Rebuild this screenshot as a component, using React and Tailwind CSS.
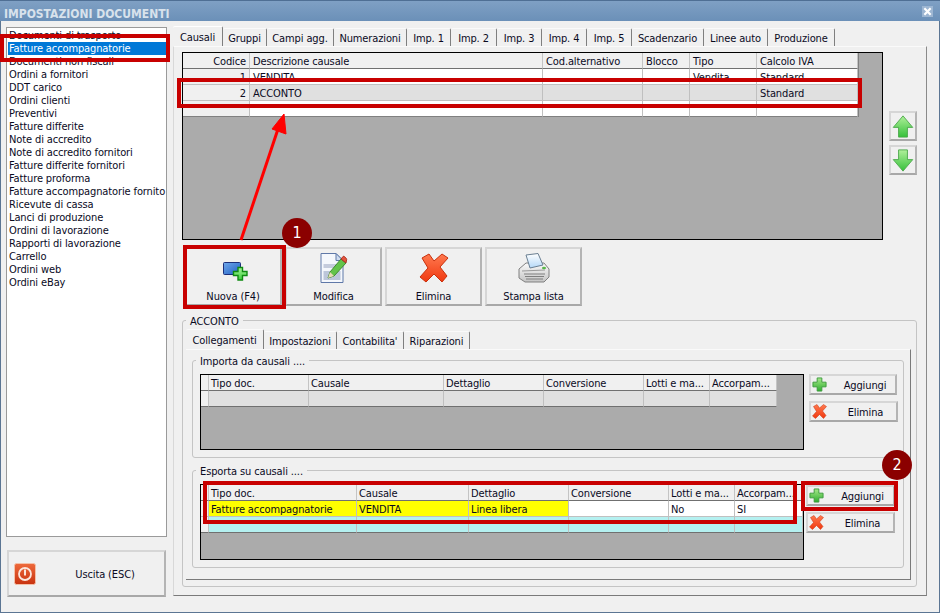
import { useId } from "react";

const documenti = [
  "Documenti di trasporto",
  "Fatture accompagnatorie",
  "Documenti non fiscali",
  "Ordini a fornitori",
  "DDT carico",
  "Ordini clienti",
  "Preventivi",
  "Fatture differite",
  "Note di accredito",
  "Note di accredito fornitori",
  "Fatture differite fornitori",
  "Fatture proforma",
  "Fatture accompagnatorie fornito",
  "Ricevute di cassa",
  "Lanci di produzione",
  "Ordini di lavorazione",
  "Rapporti di lavorazione",
  "Carrello",
  "Ordini web",
  "Ordini eBay",
];

const mainTabs = [
  ["Causali", "w-[50px] h-[20px] border-t-white"],
  ["Gruppi", "w-[44px] h-[18px]"],
  ["Campi agg.", "w-[67px] h-[18px]"],
  ["Numerazioni", "w-[73px] h-[18px]"],
  ["Imp. 1", "w-[44px] h-[18px]"],
  ["Imp. 2", "w-[46px] h-[18px]"],
  ["Imp. 3", "w-[45px] h-[18px]"],
  ["Imp. 4", "w-[45px] h-[18px]"],
  ["Imp. 5", "w-[45px] h-[18px]"],
  ["Scadenzario", "w-[72px] h-[18px]"],
  ["Linee auto", "w-[64px] h-[18px]"],
  ["Produzione", "w-[67px] h-[18px]"],
];

const subTabs = [
  ["Collegamenti", "w-[78px] h-[20px]"],
  ["Impostazioni", "w-[73px] h-[18px]"],
  ["Contabilita'", "w-[67px] h-[18px]"],
  ["Riparazioni", "w-[66px] h-[18px]"],
];

const linkHeaders = ["Tipo doc.", "Causale", "Dettaglio", "Conversione", "Lotti e ma...", "Accorpam..."];

function Tab({ label, className }) {
  return (
    <div className={`flex items-center justify-center rounded-t-[2px] border-t border-r border-t-[#fafafa] border-r-[#7f7f7f] bg-[#f0f0f0] pt-[3px] whitespace-nowrap ${className}`}>
      {label}
    </div>
  );
}

function Cell({ children, className = "" }) {
  return (
    <div className={`h-[16px] overflow-hidden whitespace-nowrap border-r border-b border-[#c0c0c0] px-[3px] leading-[17px] ${className}`}>
      {children}
    </div>
  );
}

function Head({ children, className = "" }) {
  return (
    <div className={`h-[16px] overflow-hidden whitespace-nowrap border-r border-b border-r-[#c4c4c4] border-b-[#707070] bg-[#f0f0f0] px-[3px] leading-[17px] ${className}`}>
      {children}
    </div>
  );
}

function PlusIcon({ className }) {
  const id = useId();
  return (
    <svg viewBox="0 0 16 16" className={className}>
      <defs>
        <linearGradient id={id} x1="0" y1="0" x2="0" y2="1">
          <stop offset="0" stopColor="#a6e88a" />
          <stop offset="1" stopColor="#2fae2f" />
        </linearGradient>
      </defs>
      <path d="M5.500 1h5v4.500H15v5h-4.500V15h-5v-4.500H1v-5h4.500z" fill={`url(#${id})`} stroke="#3c9a3c" strokeLinejoin="round" />
    </svg>
  );
}

function CrossIcon({ className }) {
  const id = useId();
  return (
    <svg viewBox="0 0 30 30" className={className}>
      <defs>
        <linearGradient id={id} x1="0" y1="0" x2="0" y2="1">
          <stop offset="0" stopColor="#ff7a50" />
          <stop offset="1" stopColor="#f0380f" />
        </linearGradient>
      </defs>
      <path
        d="M3 5 10 1 15 8 23 1 29 5 21 14 28 23 23 29 15 21 7 29 1 24 9 15z"
        fill={`url(#${id})`}
        stroke="#c8300c"
        strokeLinejoin="round"
      />
    </svg>
  );
}

function ArrowIcon({ down = false }) {
  const id = useId();
  return (
    <svg viewBox="0 0 24 26" className="h-[23px] w-[22px]">
      <defs>
        <linearGradient id={id} x1="0" y1="0" x2="0" y2="1">
          <stop offset="0" stopColor="#b0f09a" />
          <stop offset="1" stopColor="#35c03a" />
        </linearGradient>
      </defs>
      <path
        d={down ? "M7 1h10v11h6L12 25 1 12h6z" : "M12 1l11 13h-6v11H7V14H1z"}
        fill={`url(#${id})`}
        stroke="#46a646"
        strokeLinejoin="round"
      />
    </svg>
  );
}

function NuovaIcon() {
  return (
    <svg viewBox="0 0 25 20" className="mt-[7px] ml-[4px] h-[20px] w-[25px]">
      <defs>
        <linearGradient id="nuovaBlue" x1="0" y1="0" x2="1" y2="1">
          <stop offset="0" stopColor="#6fa8ea" />
          <stop offset="1" stopColor="#1f5ec4" />
        </linearGradient>
        <linearGradient id="nuovaGreen" x1="0" y1="0" x2="0" y2="1">
          <stop offset="0" stopColor="#a8f59a" />
          <stop offset="1" stopColor="#3ccf3c" />
        </linearGradient>
      </defs>
      <rect x="0.500" y="0.500" width="17" height="12" rx="1" fill="url(#nuovaBlue)" stroke="#1c2f7a" />
      <path d="M15 5.500h4.500v4H24v4h-4.500V18H15v-4.500h-4.500v-4H15z" fill="url(#nuovaGreen)" stroke="#0f8a12" strokeWidth="1.400" />
    </svg>
  );
}

function ModificaIcon() {
  return (
    <svg viewBox="0 0 28 30" className="h-[30px] w-[28px]">
      <path d="M1 .5h15l7 7v22H1z" fill="#f4f7fc" stroke="#5f78a8" />
      <path d="M16 .5v7h7z" fill="#cfdcf0" stroke="#5f78a8" />
      <rect x="3.500" y="11" width="17" height="4" fill="#c4cbdc" />
      <rect x="3.500" y="18" width="17" height="9" fill="#bcc6da" />
      <path d="M8 25l2-6L21 6l5 4-12 13z" fill="#63c34a" stroke="#3f8a30" strokeLinejoin="round" />
      <path d="M21 6l2-2.500c1-1 4.500 2.500 3.500 3.500L26 10z" fill="#e4553f" stroke="#a83020" />
      <path d="M8 25l2-6 4 4z" fill="#e8d9b8" />
    </svg>
  );
}

function PrinterIcon() {
  return (
    <svg viewBox="0 0 32 30" className="h-[30px] w-[32px]">
      <defs>
        <linearGradient id="printerPaper" x1="0" y1="0" x2="0" y2="1">
          <stop offset="0" stopColor="#ffffff" />
          <stop offset="1" stopColor="#b4d8f8" />
        </linearGradient>
        <linearGradient id="printerBody" x1="0" y1="0" x2="0" y2="1">
          <stop offset="0" stopColor="#fafafa" />
          <stop offset="1" stopColor="#c4c4c4" />
        </linearGradient>
      </defs>
      <path d="M1 16 8 10h18l5 6v8l-5 5H7l-6-4z" fill="url(#printerBody)" stroke="#808080" strokeLinejoin="round" />
      <path d="M8 2 20 0.500 25 12 12 15z" fill="url(#printerPaper)" stroke="#6a7f92" strokeLinejoin="round" />
      <path d="M4 18 27 17" stroke="#9a9a9a" />
      <ellipse cx="26" cy="15" rx="2" ry="1.200" fill="#57b84a" />
      <path d="M6 21h21M7 23.500h19M8 26h17" stroke="#7f7f7f" />
    </svg>
  );
}

function BigButton({ label, icon, className = "" }) {
  return (
    <div className={`flex h-[59px] flex-col items-center border-2 border-[#d6d6d6] border-r-[#b4b4b4] border-b-[#a8a8a8] bg-[#f0f0f0] ${className}`}>
      <div className="flex h-[36px] items-center justify-center pt-[2px]">{icon}</div>
      <div className="mt-[5px] leading-[14px]">{label}</div>
    </div>
  );
}

function SideButton({ label, icon, className = "" }) {
  return (
    <div className={`flex h-[21px] items-center border-2 border-[#d6d6d6] border-r-[#b4b4b4] border-b-[#a8a8a8] bg-[#f0f0f0] pl-[1px] ${className}`}>
      {icon}
      <span className="flex-1 pt-[3px] pl-[8px] text-center">{label}</span>
    </div>
  );
}

function GroupBox({ title, className = "", children }) {
  return (
    <div className={`relative rounded-[3px] border border-[#c4c4c4] ${className}`}>
      <span className="absolute top-[-6px] left-[3px] bg-[#f0f0f0] px-[4px] leading-[14px]">{title}</span>
      {children}
    </div>
  );
}

function ImportGrid() {
  return (
    <div className="h-[76px] w-[604px] border border-black bg-[#ababab]">
      <div className="grid w-[576px] grid-cols-[8px_100px_135px_100px_100px_66px_67px] border-r border-[#707070] [&>div]:pl-[2px]">
        <Head />
        {linkHeaders.map((h) => (
          <Head key={h}>{h}</Head>
        ))}
        <Cell className="!border-b-[#707070] bg-[#f0f0f0]" />
        {linkHeaders.map((h) => (
          <Cell key={h} className="!border-b-[#707070] bg-[#e0e0e0]" />
        ))}
      </div>
    </div>
  );
}

function ExportGrid() {
  return (
    <div className="h-[76px] w-[604px] border border-black bg-[#ababab]">
      <div className="grid grid-cols-[8px_148px_112px_100px_100px_66px_68px] [&>div]:pl-[2px]">
        <Head />
        {linkHeaders.map((h) => (
          <Head key={h}>{h}</Head>
        ))}
        <Cell className="bg-[#f0f0f0]" />
        <Cell className="bg-[#ffff00]">Fatture accompagnatorie</Cell>
        <Cell className="bg-[#ffff00]">VENDITA</Cell>
        <Cell className="bg-[#ffff00]">Linea libera</Cell>
        <Cell className="bg-white" />
        <Cell className="bg-white">No</Cell>
        <Cell className="bg-white">SI</Cell>
        <Cell className="!border-b-[#707070] bg-[#f0f0f0]" />
        {linkHeaders.map((h) => (
          <Cell key={h} className="!border-b-[#707070] bg-[#b4f0f0]" />
        ))}
      </div>
    </div>
  );
}

function CausaliGrid() {
  return (
    <div className="h-[188px] w-[701px] border border-black bg-[#ababab]">
      <div className="grid w-[676px] grid-cols-[67px_293px_100px_47px_67px_101px] border-r border-[#808080]">
        <Head className="text-right">Codice</Head>
        <Head>Descrizione causale</Head>
        <Head>Cod.alternativo</Head>
        <Head>Blocco</Head>
        <Head>Tipo</Head>
        <Head>Calcolo IVA</Head>

        <Cell className="bg-[#f0f0f0] text-right">1</Cell>
        <Cell className="bg-white">VENDITA</Cell>
        <Cell className="bg-white" />
        <Cell className="bg-white" />
        <Cell className="bg-white">Vendita</Cell>
        <Cell className="bg-white">Standard</Cell>

        <Cell className="bg-[#f0f0f0] text-right">2</Cell>
        <Cell className="bg-[#e0e0e0]">ACCONTO</Cell>
        <Cell className="bg-[#e0e0e0]" />
        <Cell className="bg-[#e0e0e0]" />
        <Cell className="bg-[#e0e0e0]" />
        <Cell className="bg-[#e0e0e0]">Standard</Cell>

        <Cell className="!border-b-[#808080] bg-[#f0f0f0]" />
        <Cell className="!border-b-[#808080] bg-white" />
        <Cell className="!border-b-[#808080] bg-white" />
        <Cell className="!border-b-[#808080] bg-white" />
        <Cell className="!border-b-[#808080] bg-white" />
        <Cell className="!border-b-[#808080] bg-white" />
      </div>
    </div>
  );
}

function Badge({ n, className }) {
  return (
    <div className={`absolute flex h-[30px] w-[30px] items-center justify-center rounded-full bg-[#8b0000] text-[16px] text-white ${className}`}>
      {n}
    </div>
  );
}

export default function App() {
  return (
    <div className="relative flex h-[613px] w-[940px] flex-col overflow-hidden border-b border-[#5b7593] bg-[#f0f0f0] font-['DejaVu_Sans_Condensed','Noto_Sans',sans-serif] text-[11px] tracking-[-0.12px] text-[#0a0a1e] shadow-[inset_1px_0_0_#5b7593,inset_-1px_0_0_#5b7593]">
      {/* Barra titolo */}
      <div className="flex h-[21px] shrink-0 items-center justify-between border-t border-[#4f6f94] bg-gradient-to-b from-[#7fa0c4] to-[#6b90b8] pr-[7px] pl-[4px]">
        <span className="pt-[5px] text-[12px] font-bold tracking-normal text-[#d8e2ec]">IMPOSTAZIONI DOCUMENTI</span>
        <div className="flex h-[11px] w-[11px] items-center justify-center bg-[#9db6d2]">
          <svg viewBox="0 0 10 10" className="h-[9px] w-[9px]">
            <path d="M1.500 1.500l7 7M8.500 1.500l-7 7" stroke="white" strokeWidth="2.400" />
          </svg>
        </div>
      </div>

      <div className="flex flex-1">
        {/* Colonna sinistra */}
        <div className="flex w-[173px] shrink-0 flex-col pt-[6px] pl-[6px]">
          <div className="h-[510px] w-[161px] border border-[#9a9a9a] bg-white pt-[1px] pl-[1px] leading-[13px]">
            {documenti.map((d) => (
              <div
                key={d}
                className={
                  d === "Fatture accompagnatorie"
                    ? "h-[13px] overflow-hidden whitespace-nowrap bg-[#0078d7] pl-[1px] text-white"
                    : "h-[13px] overflow-hidden whitespace-nowrap pl-[1px]"
                }
              >
                {d}
              </div>
            ))}
          </div>
          <div className="mt-[13px] ml-[1px] flex h-[47px] w-[159px] items-center border-2 border-[#d6d6d6] border-r-[#b4b4b4] border-b-[#a8a8a8] pl-[5px]">
            <svg viewBox="0 0 22 22" className="h-[22px] w-[22px]">
              <defs>
                <linearGradient id="uscita" x1="0" y1="0" x2="0" y2="1">
                  <stop offset="0" stopColor="#ee6a3c" />
                  <stop offset="1" stopColor="#c8320f" />
                </linearGradient>
              </defs>
              <rect x="0.500" y="0.500" width="21" height="21" rx="2" fill="url(#uscita)" stroke="#f4c0a8" />
              <circle cx="11" cy="11" r="6" fill="none" stroke="#fbe6dc" strokeWidth="1.800" />
              <path d="M11 6.500v6" stroke="#fbe6dc" strokeWidth="2" />
            </svg>
            <span className="flex-1 pt-[4px] pl-[10px] text-center">Uscita (ESC)</span>
          </div>
        </div>

        {/* Pannello destro */}
        <div className="flex w-[754px] shrink-0 flex-col pt-[5px]">
          <div className="flex h-[20px] items-end">
            {mainTabs.map(([label, cls]) => (
              <Tab key={label} label={label} className={cls} />
            ))}
          </div>
          <div className="h-[550px] border-t border-r border-b border-l border-t-[#fafafa] border-r-[#8a8a8a] border-b-[#7a7a7a] border-l-[#d8d8d8] pt-[5px] pl-[8px]">
            <div className="flex">
              <CausaliGrid />
              <div className="ml-[6px] flex flex-col gap-[4px] pt-[59px]">
                <div className="flex h-[30px] w-[28px] items-center justify-center border-2 border-[#d6d6d6] border-r-[#b4b4b4] border-b-[#a8a8a8]">
                  <ArrowIcon />
                </div>
                <div className="flex h-[30px] w-[28px] items-center justify-center border-2 border-[#d6d6d6] border-r-[#b4b4b4] border-b-[#a8a8a8]">
                  <ArrowIcon down />
                </div>
              </div>
            </div>

            <div className="mt-[7px] ml-[2px] flex gap-[3px]">
              <BigButton label="Nuova (F4)" icon={<NuovaIcon />} className="w-[98px]" />
              <BigButton label="Modifica" icon={<ModificaIcon />} className="w-[97px]" />
              <BigButton label="Elimina" icon={<CrossIcon className="h-[30px] w-[30px]" />} className="w-[97px]" />
              <BigButton label="Stampa lista" icon={<PrinterIcon />} className="w-[97px]" />
            </div>

            <GroupBox title="ACCONTO" className="mt-[14px] h-[267px] w-[735px] pt-[8px] pl-[3px]">
              <div className="flex h-[20px] items-end">
                {subTabs.map(([label, cls]) => (
                  <Tab key={label} label={label} className={cls} />
                ))}
              </div>
              <div className="h-[231px] w-[725px] border-t border-r border-b border-t-[#fafafa] border-r-[#7a7a7a] border-b-[#7a7a7a] pt-[10px] pl-[6px]">
                <GroupBox title="Importa da causali ...." className="flex h-[98px] w-[712px] pt-[13px] pl-[7px]">
                  <ImportGrid />
                  <div className="ml-[5px] flex flex-col gap-[6px]">
                    <SideButton label="Aggiungi" icon={<PlusIcon className="h-[15px] w-[15px]" />} className="w-[88px]" />
                    <SideButton label="Elimina" icon={<CrossIcon className="h-[15px] w-[15px]" />} className="w-[89px]" />
                  </div>
                </GroupBox>
                <GroupBox title="Esporta su causali ...." className="mt-[12px] flex h-[98px] w-[712px] pt-[13px] pl-[7px]">
                  <ExportGrid />
                  <div className="ml-[2px] flex flex-col gap-[6px] pt-[1px]">
                    <SideButton label="Aggiungi" icon={<PlusIcon className="h-[15px] w-[15px]" />} className="w-[89px]" />
                    <SideButton label="Elimina" icon={<CrossIcon className="h-[15px] w-[15px]" />} className="w-[89px]" />
                  </div>
                </GroupBox>
              </div>
            </GroupBox>
          </div>
        </div>
      </div>

      {/* Annotazioni rosse sopra lo screenshot */}
      <div className="absolute top-[34px] left-0 h-[28px] w-[170px] border-4 border-[#c80000]" />
      <div className="absolute top-[78px] left-[177px] h-[30px] w-[685px] border-4 border-[#c80000]" />
      <div className="absolute top-[245px] left-[183px] h-[64px] w-[103px] border-4 border-[#c80000]" />
      <div className="absolute top-[481px] left-[203px] h-[43px] w-[594px] border-4 border-[#c80000]" />
      <div className="absolute top-[481px] left-[801px] h-[30px] w-[97px] border-4 border-[#c80000]" />
      <svg className="absolute top-0 left-0 h-[613px] w-[940px]" viewBox="0 0 940 613" fill="none">
        <path d="M241 240 278 129" stroke="#ff0000" strokeWidth="3" />
        <path d="M284 114 272 129 286 134z" fill="#ff0000" stroke="#ff0000" />
      </svg>
      <Badge n="1" className="top-[218px] left-[282px]" />
      <Badge n="2" className="top-[450px] left-[882px]" />
    </div>
  );
}
